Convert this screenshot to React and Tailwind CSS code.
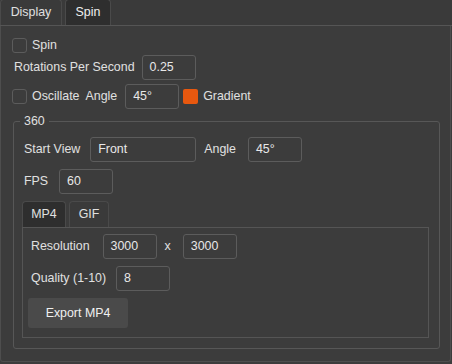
export default function App() {
  const font = { fontFamily: '"Liberation Sans", Arial, sans-serif' };
  const input = "h-[25px] rounded-[3px] border border-[#5c5c5c] bg-[#3c3c3c] px-[7px] flex items-center text-[#e8e8e8]";
  return (
    <div style={font} className="w-[452px] h-[364px] bg-[#3c3c3c] text-[12.4px] text-[#e0e0e0] flex flex-col">
      {/* top tabs */}
      <div className="h-[26px] flex items-end gap-[3px] border-b border-[#555555] bg-[#3a3a3a]">
        <div className="h-[26px] w-[62px] rounded-t-[4px] border border-b-0 border-[#4a4a4a] bg-[#3a3a3a] flex items-center justify-center">Display</div>
        <div className="h-[26px] w-[46px] rounded-t-[4px] border border-b-0 border-[#4a4a4a] bg-[#2e2e2e] flex items-center justify-center text-[#f0f0f0]">Spin</div>
      </div>
      {/* panel */}
      <div className="flex-1 mb-[2px] mr-[1px] border-x border-b border-[#4e4e4e] rounded-b-[3px] pl-[11px] pr-[9px] pt-[11px] flex flex-col">
        <div className="flex items-center h-[16px]">
          <div className="w-[15px] h-[15px] rounded-[3px] border border-[#5c5c5c]" />
          <span className="ml-[5px]">Spin</span>
        </div>
        <div className="flex items-center mt-[2px] pl-[2px]">
          <span>Rotations Per Second</span>
          <div className={input + " ml-[7px] w-[54px]"}>0.25</div>
        </div>
        <div className="flex items-center mt-[4px]">
          <div className="w-[15px] h-[15px] rounded-[3px] border border-[#5c5c5c]" />
          <span className="ml-[5px]">Oscillate</span>
          <span className="ml-[6px]">Angle</span>
          <div className={input + " ml-[8px] w-[54px]"}>45°</div>
          <div className="ml-[4px] w-[15px] h-[15px] rounded-[2px] bg-[#e8580f]" />
          <span className="ml-[5px]">Gradient</span>
        </div>
        {/* group box */}
        <div className="relative mt-[12px] ml-[1px] mr-[1px] h-[228px] rounded-[3px] border border-[#575757] pl-[8px] pr-[10px] pt-[15px] flex flex-col">
          <span className="absolute -top-[9px] left-[6px] px-[4px] bg-[#3c3c3c] leading-[16px]">360</span>
          <div className="flex items-center pl-[2px]">
            <span>Start View</span>
            <div className={input + " ml-[10px] w-[106px]"}>Front</div>
            <span className="ml-[8px]">Angle</span>
            <div className={input + " ml-[12px] w-[54px]"}>45°</div>
          </div>
          <div className="flex items-center mt-[7px] pl-[2px]">
            <span>FPS</span>
            <div className={input + " ml-[11px] w-[54px]"}>60</div>
          </div>
          {/* inner tabs */}
          <div className="mt-[7px] flex items-end gap-[3px] h-[26px]">
            <div className="h-[26px] w-[44px] rounded-t-[4px] border border-b-0 border-[#4a4a4a] bg-[#2e2e2e] flex items-center justify-center">MP4</div>
            <div className="h-[26px] w-[40px] rounded-t-[4px] border border-b-0 border-[#4a4a4a] bg-[#3a3a3a] flex items-center justify-center">GIF</div>
          </div>
          <div className="h-[111px] border border-[#555555] pl-[8px] pt-[6px] flex flex-col">
            <div className="flex items-center">
              <span>Resolution</span>
              <div className={input + " ml-[13px] w-[54px]"}>3000</div>
              <span className="ml-[8px]">x</span>
              <div className={input + " ml-[12px] w-[54px]"}>3000</div>
            </div>
            <div className="flex items-center mt-[7px]">
              <span>Quality (1-10)</span>
              <div className={input + " ml-[10px] w-[54px]"}>8</div>
            </div>
            <div className="mt-[7px] -ml-[3px] w-[100px] h-[30px] rounded-[3px] bg-[#4a4a4a] flex items-center justify-center text-[#f0f0f0]">Export MP4</div>
          </div>
        </div>
      </div>
    </div>
  );
}
